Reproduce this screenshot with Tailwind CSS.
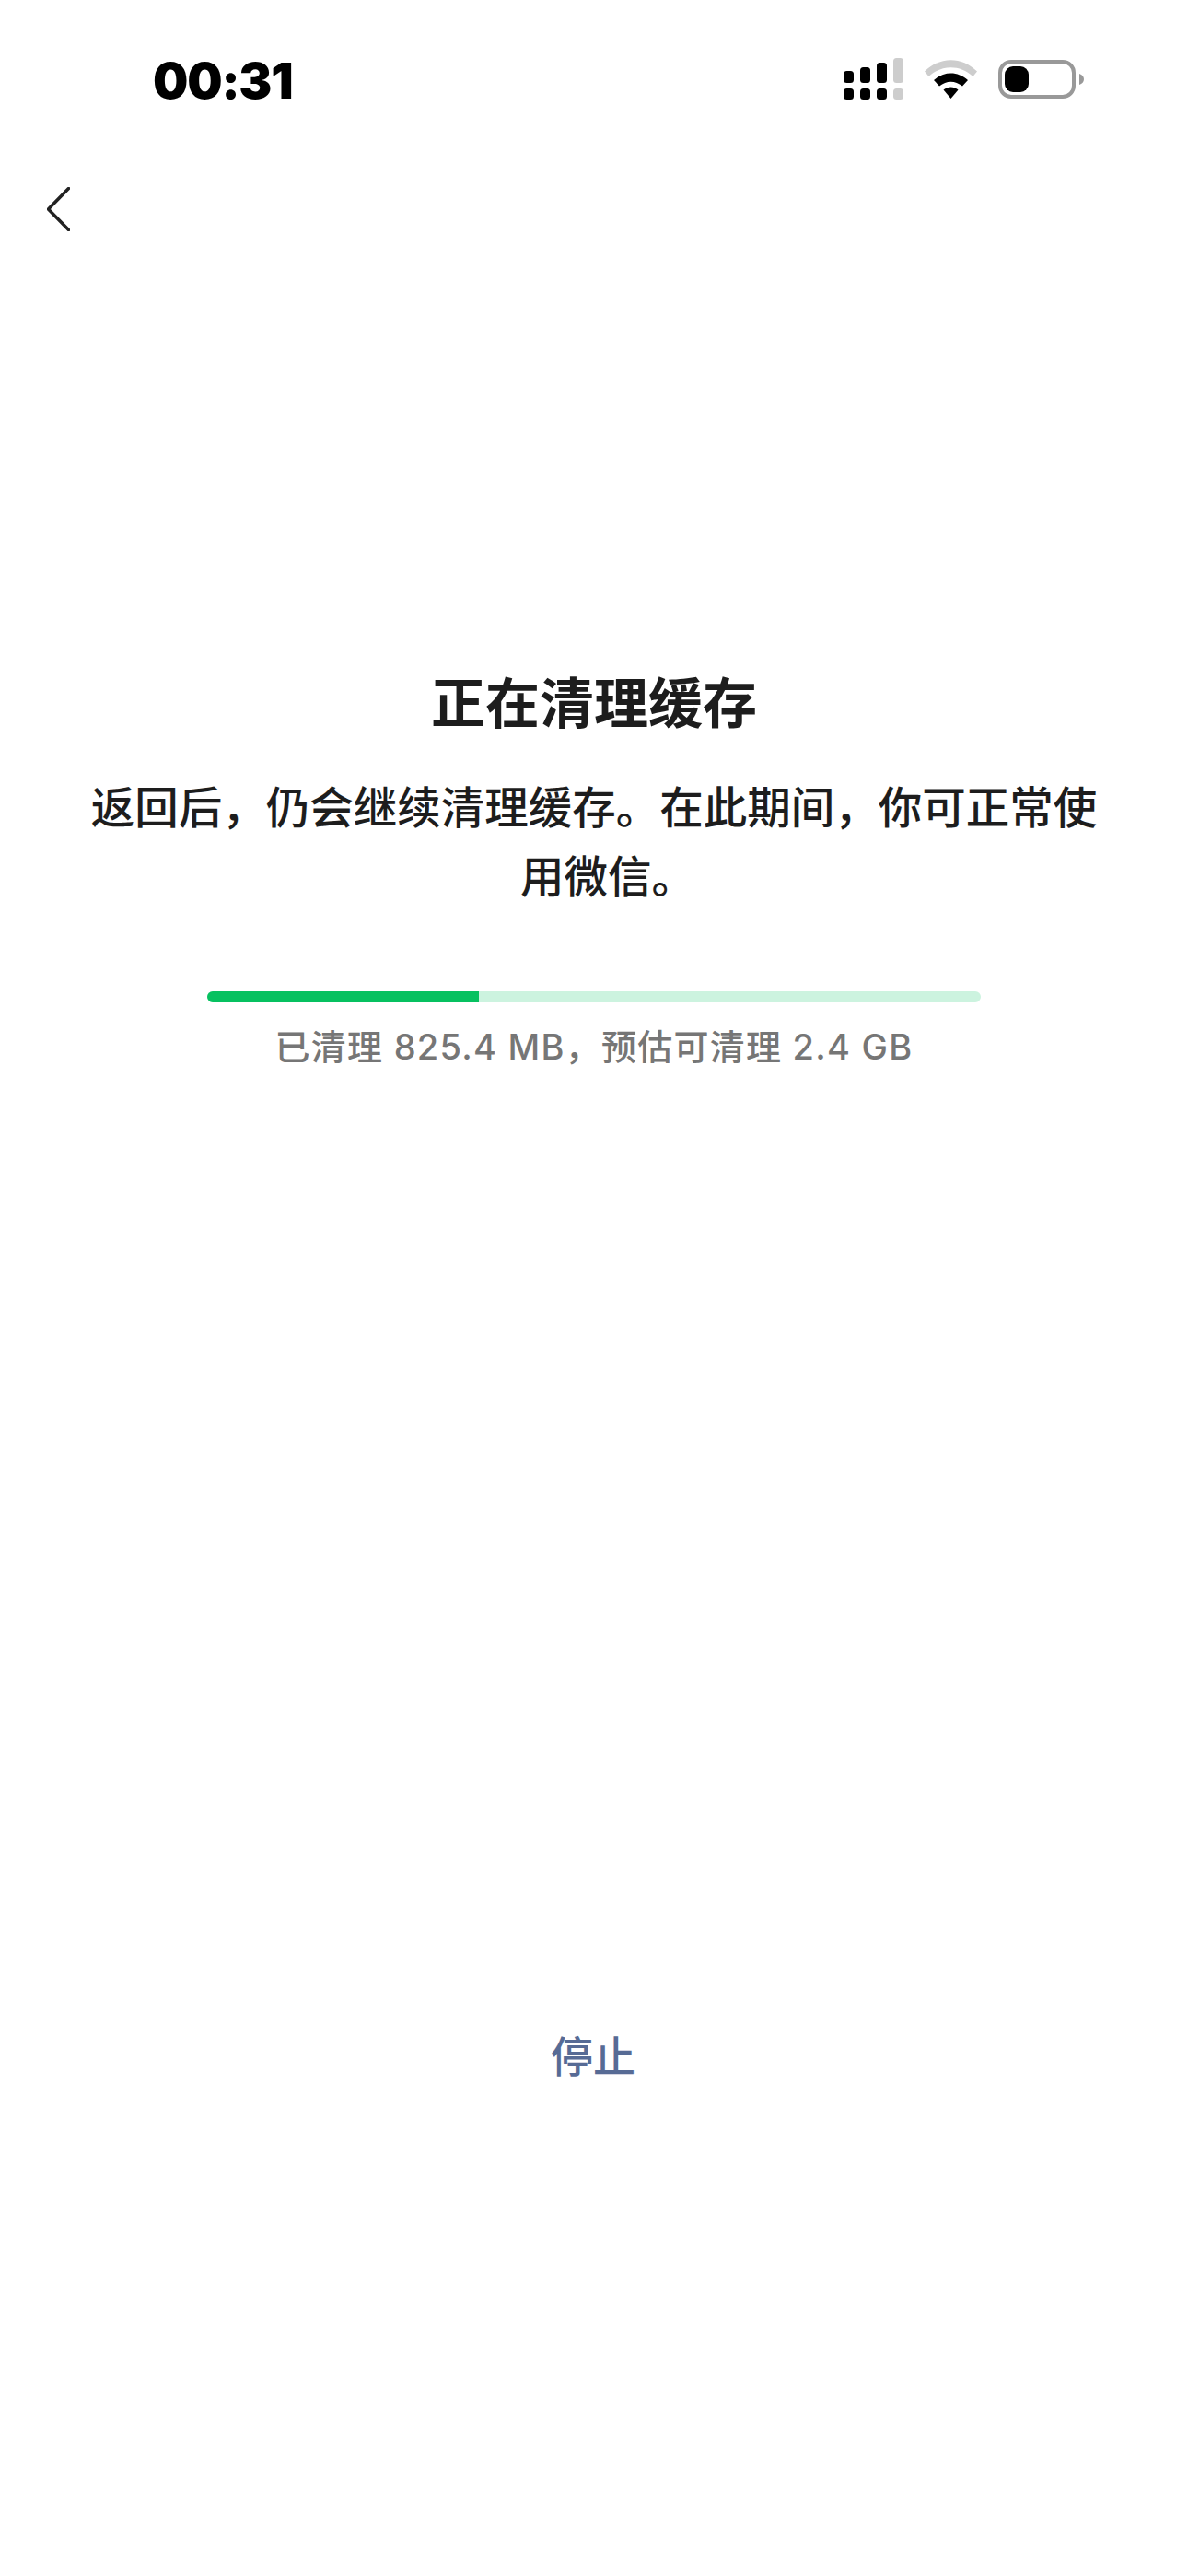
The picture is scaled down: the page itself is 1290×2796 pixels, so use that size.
<!DOCTYPE html>
<html lang="zh-CN">
<head>
  <meta charset="UTF-8">
  <title>清理缓存</title>
  <script src="https://cdn.jsdelivr.net/npm/@tailwindcss/browser@4"></script>
</head>
<body class="bg-white min-h-screen font-['Inter','Noto_Sans_CJK_SC',sans-serif]">
  <div class="w-[1290px] h-[2796px] flex flex-col items-center">

    <!-- Status bar -->
    <div class="w-full h-[176px] shrink-0 flex items-start justify-between pl-[166px] pr-[113px] pt-[60px]">
      <span class="font-black text-[54px] leading-[56px] tracking-[-1.2px] text-black">00:31</span>
      <div class="flex items-center gap-[23px] pt-[3px]">
        <!-- signal -->
        <svg class="w-[65px] h-[45px]" viewBox="0 0 65 45">
          <g fill="#000">
            <rect x="0" y="14" width="11" height="13" rx="3.5"/>
            <rect x="18" y="10" width="11" height="17" rx="3.5"/>
            <rect x="36" y="5" width="11" height="22" rx="3.5"/>
            <rect x="0" y="33" width="11" height="12" rx="3.5"/>
            <rect x="18" y="33" width="11" height="12" rx="3.5"/>
            <rect x="36" y="33" width="11" height="12" rx="3.5"/>
          </g>
          <g fill="#cdcdcd">
            <rect x="54" y="0" width="11" height="27" rx="3.5"/>
            <rect x="54" y="33" width="11" height="12" rx="3.5"/>
          </g>
        </svg>
        <!-- wifi -->
        <svg class="w-[57px] h-[42px]" viewBox="0 0 57 42">
          <path d="M0 12.5C16.500 -4 40.500 -4 57 12.500L52.500 18C38.500 5 18.500 5 4.500 18Z" fill="#cdcdcd"/>
          <path d="M10 22C21 12 36 12 47 22L41 28.500C33 22 24 22 16 28.500Z" fill="#000"/>
          <path d="M20.500 32.500C25.500 28.500 31.500 28.500 36.500 32.500L28.500 42Z" fill="#000"/>
        </svg>
        <!-- battery -->
        <svg class="w-[93px] h-[42px]" viewBox="0 0 93 42">
          <rect x="2" y="2" width="80" height="38" rx="12" fill="none" stroke="#999" stroke-width="4"/>
          <rect x="7" y="7" width="26" height="28" rx="9" fill="#000"/>
          <path d="M88 15C91 16 93 18 93 21C93 24 91 26 88 27Z" fill="#999"/>
        </svg>
      </div>
    </div>

    <!-- Nav -->
    <div class="w-full h-[90px] shrink-0 pl-[51px] pt-[27px]">
      <svg class="w-[25px] h-[48px]" viewBox="0 0 25 48" fill="none" stroke="#222" stroke-width="3.500" stroke-linecap="round" stroke-linejoin="round">
        <path d="M23.500 1.500L1.500 24L23.500 46.500"/>
      </svg>
    </div>

    <!-- Content -->
    <h1 class="mt-[462px] text-[59px] leading-[72px] font-bold text-[#1d1d1d] text-center">正在清理缓存</h1>
    <div class="mt-[39px] w-[1120px] text-[47.5px] leading-[75px] font-medium text-[#1d1d1d] text-center">
      <p>返回后，仍会继续清理缓存。在此期间，你可正常使</p>
      <p class="pl-[30px]">用微信。</p>
    </div>

    <div class="mt-[87px] w-[840px] h-[12px] rounded-full bg-[#ccf3df] overflow-hidden shrink-0">
      <div class="w-[295px] h-full bg-[#07c160]"></div>
    </div>
    <p class="mt-[22px] text-[38px] leading-[52px] tracking-[1.25px] font-medium text-[#767676] text-center">已清理 825.4 MB，预估可清理 2.4 GB</p>

    <div class="mt-[1040px] -ml-[2px] text-[46px] leading-[60px] font-medium text-[#576b95] text-center">停止</div>
  </div>
</body>
</html>
